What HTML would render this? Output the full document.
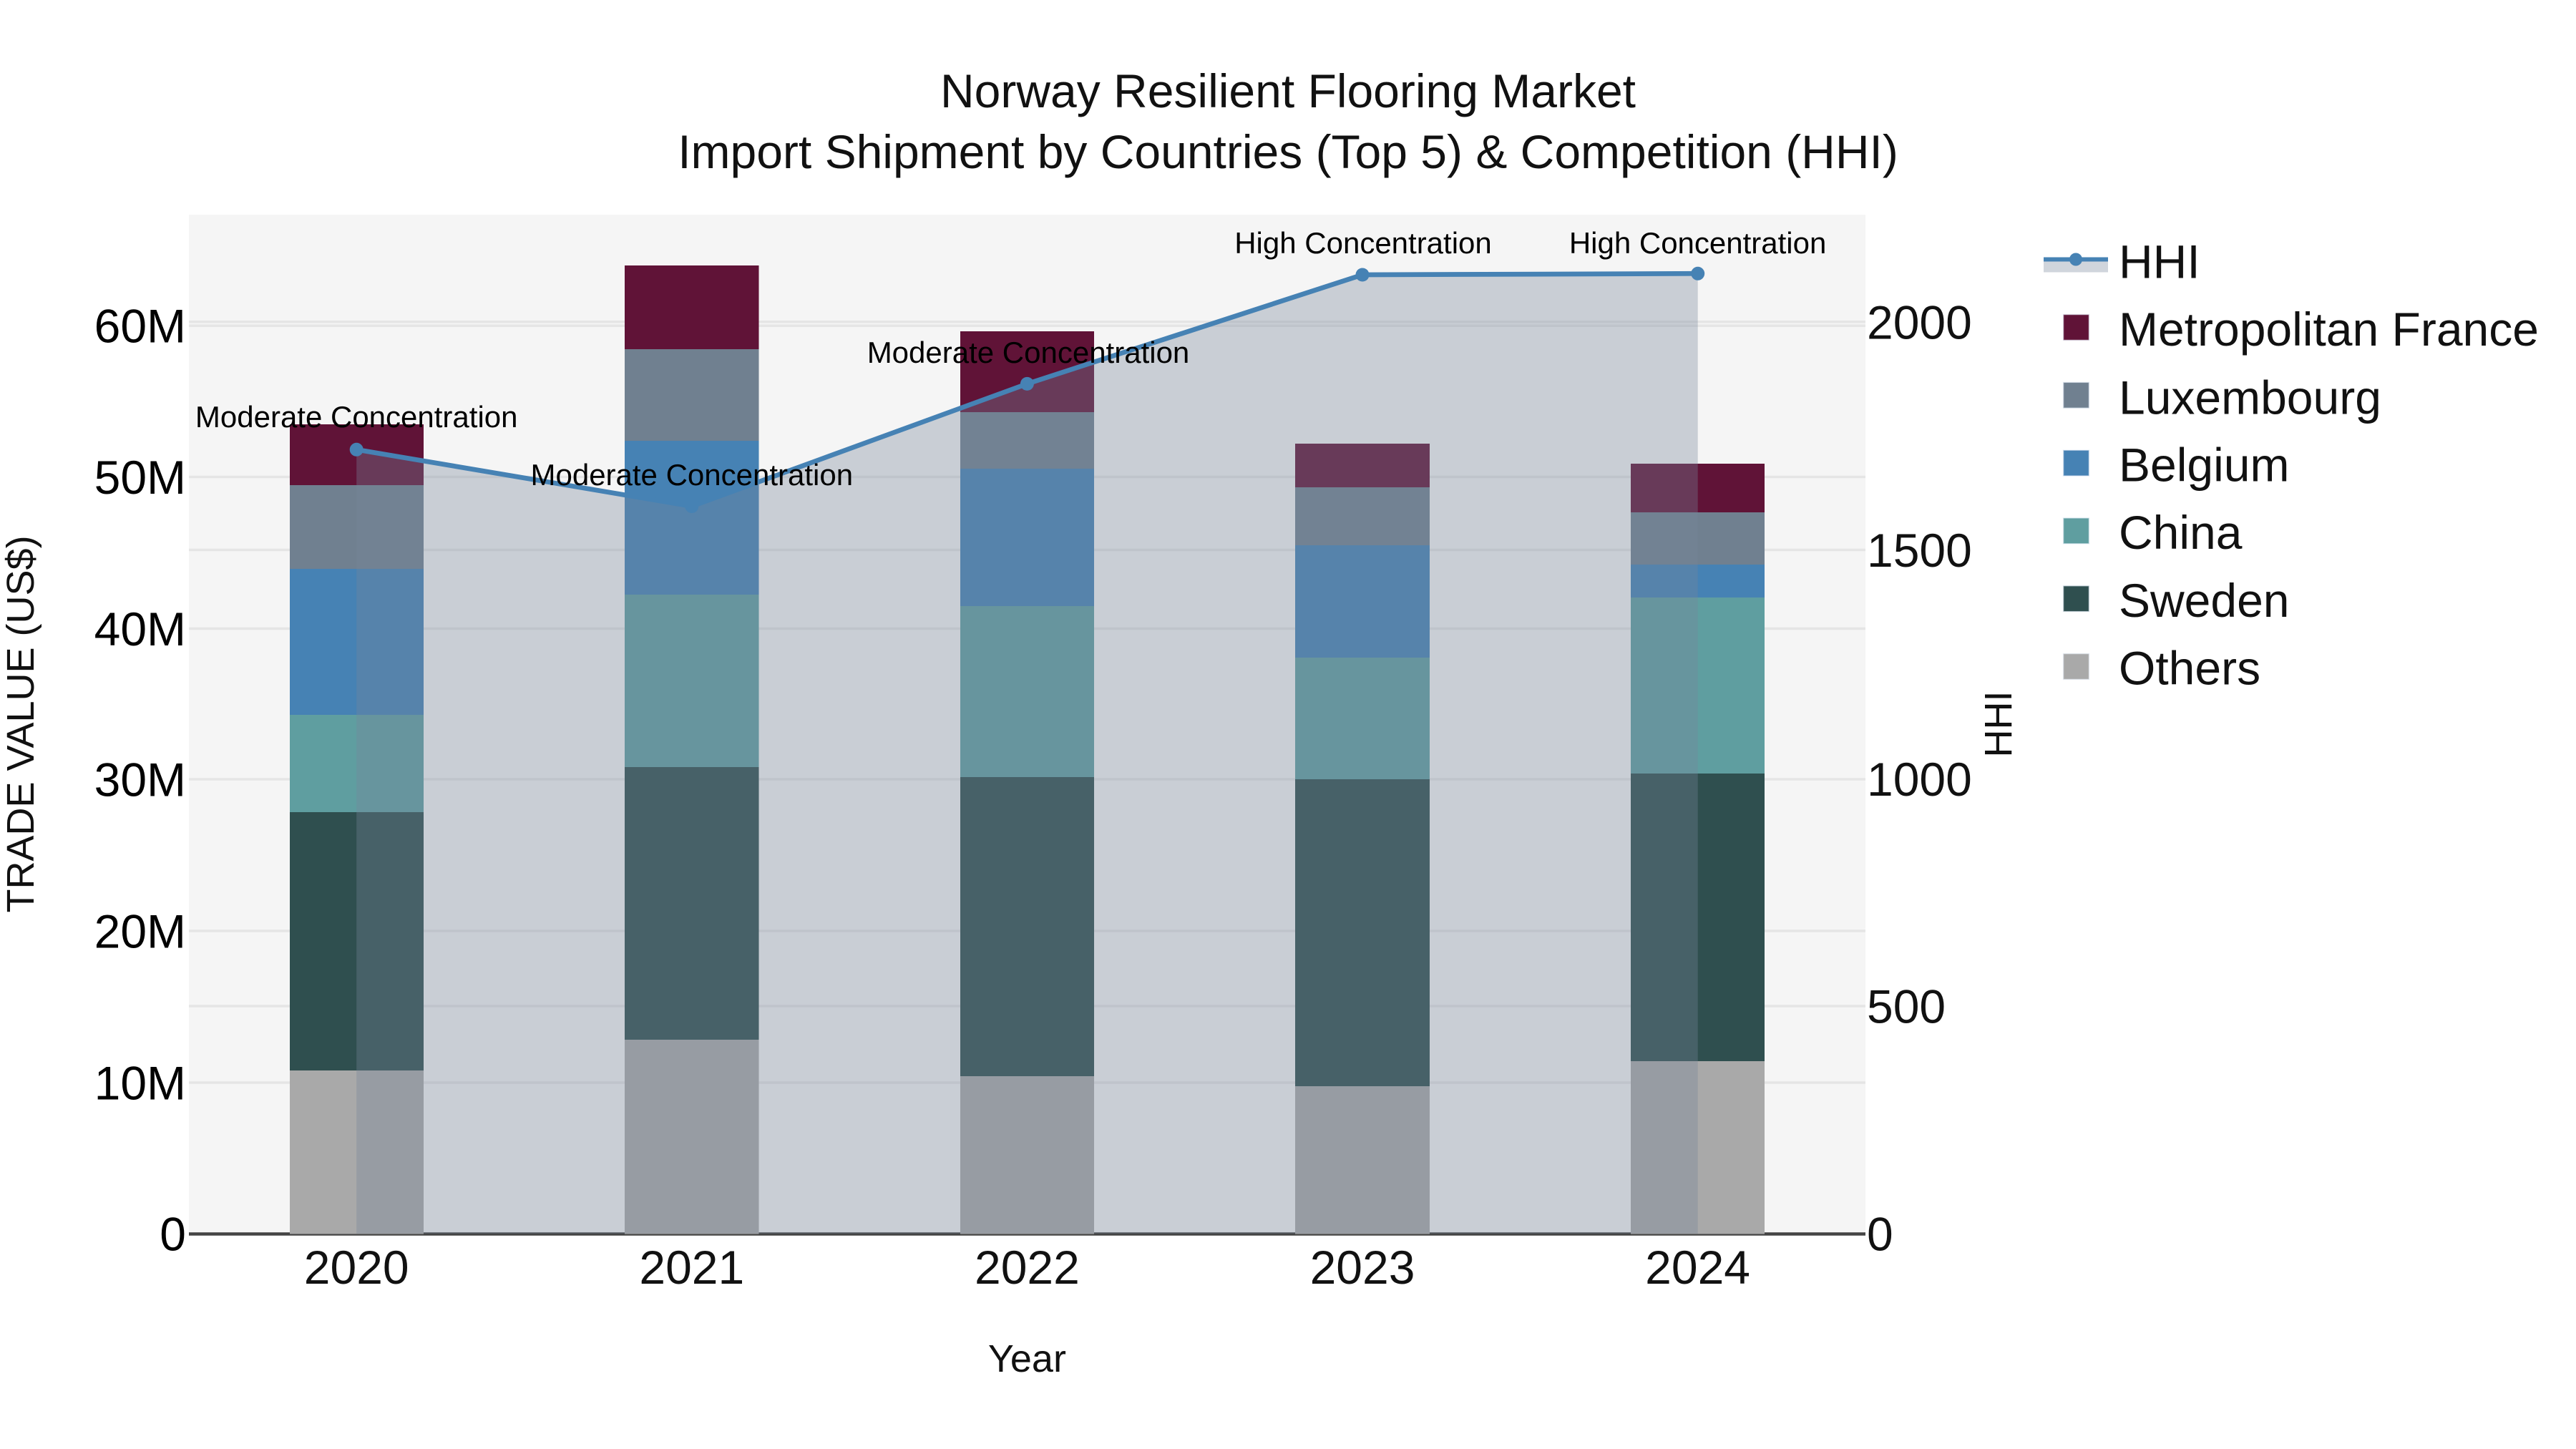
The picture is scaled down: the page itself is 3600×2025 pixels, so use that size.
<!DOCTYPE html>
<html lang="en">
<head>
<meta charset="utf-8">
<title>Norway Resilient Flooring Market</title>
<style>
html,body{margin:0;padding:0;background:#fff;width:3600px;height:2025px;overflow:hidden}
svg{display:block}
text{font-family:"Liberation Sans",Arial,sans-serif;fill:#111}
.tick{font-size:66px}
.leg{font-size:66px}
.ann{font-size:42px;fill:#000;text-anchor:middle}
.at{font-size:54px}
.yl{text-anchor:end;fill:#000}
.xl{text-anchor:middle}
</style>
</head>
<body>
<svg width="3600" height="2025" viewBox="0 0 3600 2025" xmlns="http://www.w3.org/2000/svg">
<rect width="3600" height="2025" fill="#fff"/>
<rect x="264" y="300" width="2343" height="1424" fill="#f5f5f5"/>
<g stroke="#e5e5e5" stroke-width="3.5">
<path d="M264 455.3H2607M264 666.5H2607M264 878.5H2607M264 1089H2607M264 1301H2607M264 1513H2607"/>
<path d="M264 449.7H2607M264 768.5H2607M264 1406H2607"/>
</g>
<path d="M264 1724.5H2607" stroke="#444" stroke-width="4.5" fill="none"/>
<g shape-rendering="crispEdges">
<g fill="#a9a9a9"><rect x="405" y="1496" width="187" height="228.5"/><rect x="873" y="1453" width="187.5" height="271.5"/><rect x="1342" y="1504" width="187" height="220.5"/><rect x="1810" y="1518" width="188" height="206.5"/><rect x="2279" y="1483" width="187" height="241.5"/></g>
<g fill="#2f4f4f"><rect x="405" y="1135" width="187" height="361"/><rect x="873" y="1072" width="187.5" height="381"/><rect x="1342" y="1086" width="187" height="418"/><rect x="1810" y="1089" width="188" height="429"/><rect x="2279" y="1081" width="187" height="402"/></g>
<g fill="#5f9ea0"><rect x="405" y="999" width="187" height="136"/><rect x="873" y="831" width="187.5" height="241"/><rect x="1342" y="847" width="187" height="239"/><rect x="1810" y="919" width="188" height="170"/><rect x="2279" y="835" width="187" height="246"/></g>
<g fill="#4682b4"><rect x="405" y="795" width="187" height="204"/><rect x="873" y="616" width="187.5" height="215"/><rect x="1342" y="655" width="187" height="192"/><rect x="1810" y="762" width="188" height="157"/><rect x="2279" y="789" width="187" height="46"/></g>
<g fill="#708090"><rect x="405" y="678" width="187" height="117"/><rect x="873" y="488" width="187.5" height="128"/><rect x="1342" y="576" width="187" height="79"/><rect x="1810" y="681" width="188" height="81"/><rect x="2279" y="716" width="187" height="73"/></g>
<g fill="#601337"><rect x="405" y="593" width="187" height="85"/><rect x="873" y="371" width="187.5" height="117"/><rect x="1342" y="463" width="187" height="113"/><rect x="1810" y="620" width="188" height="61"/><rect x="2279" y="648" width="187" height="68"/></g>
</g>
<path d="M498.2 628.3L966.8 707.5L1435.4 536.4L1904 384L2372.7 382.3V1724H498.2Z" fill="#78849b" fill-opacity="0.345"/>
<path d="M498.2 628.3L966.8 707.5L1435.4 536.4L1904 384L2372.7 382.3" fill="none" stroke="#4682b4" stroke-width="6.75"/>
<g fill="#4682b4"><circle cx="498.2" cy="628.3" r="9.5"/><circle cx="966.8" cy="707.5" r="9.5"/><circle cx="1435.4" cy="536.4" r="9.5"/><circle cx="1904" cy="384" r="9.5"/><circle cx="2372.7" cy="382.3" r="9.5"/></g>
<text class="ann" x="498.2" y="597">Moderate Concentration</text>
<text class="ann" x="966.8" y="678">Moderate Concentration</text>
<text class="ann" x="1437" y="507">Moderate Concentration</text>
<text class="ann" x="1905" y="354">High Concentration</text>
<text class="ann" x="2372.6" y="354">High Concentration</text>
<text x="1800" y="150" font-size="66" text-anchor="middle">Norway Resilient Flooring Market</text>
<text x="1800" y="235" font-size="66" text-anchor="middle">Import Shipment by Countries (Top 5) &amp; Competition (HHI)</text>
<g class="tick">
<text class="yl" x="260" y="478.5">60M</text>
<text class="yl" x="260" y="690">50M</text>
<text class="yl" x="260" y="902">40M</text>
<text class="yl" x="260" y="1112.5">30M</text>
<text class="yl" x="260" y="1324.5">20M</text>
<text class="yl" x="260" y="1536.5">10M</text>
<text class="yl" x="260" y="1747.5">0</text>
<text x="2609" y="473.5">2000</text>
<text x="2609" y="792">1500</text>
<text x="2609" y="1112">1000</text>
<text x="2609" y="1429.5">500</text>
<text x="2609" y="1747.5">0</text>
<text class="xl" x="498.2" y="1794">2020</text>
<text class="xl" x="966.8" y="1794">2021</text>
<text class="xl" x="1435.4" y="1794">2022</text>
<text class="xl" x="1904" y="1794">2023</text>
<text class="xl" x="2372.6" y="1794">2024</text>
</g>
<text class="at" x="1435.4" y="1917" text-anchor="middle">Year</text>
<text class="at" transform="translate(47 1012) rotate(-90)" text-anchor="middle">TRADE VALUE (US$)</text>
<text class="at" transform="translate(2811 1012) rotate(-90)" text-anchor="middle">HHI</text>
<rect x="2856" y="362" width="90" height="18.5" fill="#78849b" fill-opacity="0.345"/>
<path d="M2856 362.5H2946" stroke="#4682b4" stroke-width="6"/>
<circle cx="2901" cy="362.5" r="9" fill="#4682b4"/>
<g stroke="#e5ecf6" stroke-opacity="0.6" stroke-width="1.5">
<rect x="2883.5" y="439.5" width="36" height="36" fill="#601337"/>
<rect x="2883.5" y="534.3" width="36" height="36" fill="#708090"/>
<rect x="2883.5" y="629.1" width="36" height="36" fill="#4682b4"/>
<rect x="2883.5" y="723.9" width="36" height="36" fill="#5f9ea0"/>
<rect x="2883.5" y="818.7" width="36" height="36" fill="#2f4f4f"/>
<rect x="2883.5" y="913.5" width="36" height="36" fill="#a9a9a9"/>
</g>
<g class="leg">
<text x="2961" y="388.3">HHI</text>
<text x="2961" y="483">Metropolitan France</text>
<text x="2961" y="578.3">Luxembourg</text>
<text x="2961" y="672.4">Belgium</text>
<text x="2961" y="767.1">China</text>
<text x="2961" y="861.8">Sweden</text>
<text x="2961" y="956.5">Others</text>
</g>
</svg>
</body>
</html>
